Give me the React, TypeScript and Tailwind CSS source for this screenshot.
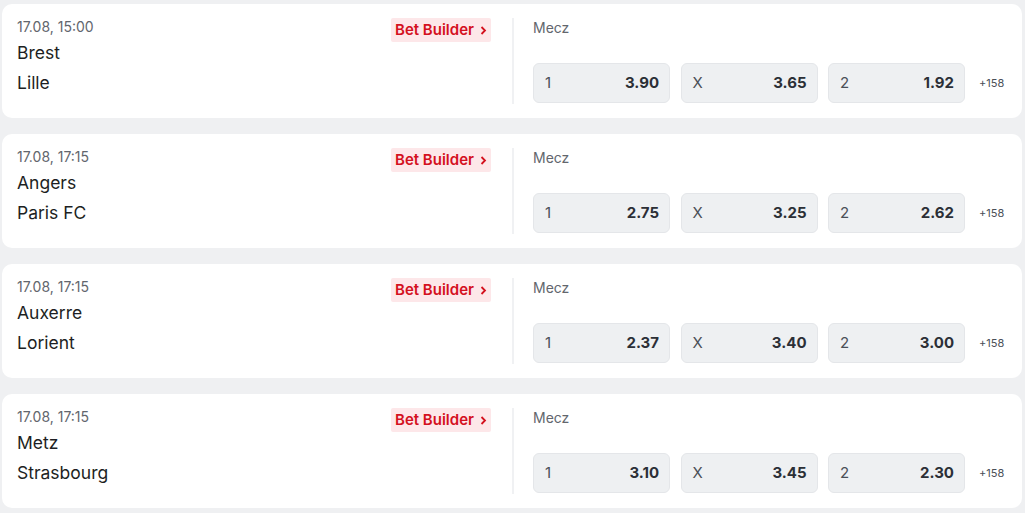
import React from "react";

type Match = {
  time: string;
  home: string;
  away: string;
  odds: [string, string, string];
};

const matches: Match[] = [
  { time: "17.08, 15:00", home: "Brest", away: "Lille", odds: ["3.90", "3.65", "1.92"] },
  { time: "17.08, 17:15", home: "Angers", away: "Paris FC", odds: ["2.75", "3.25", "2.62"] },
  { time: "17.08, 17:15", home: "Auxerre", away: "Lorient", odds: ["2.37", "3.40", "3.00"] },
  { time: "17.08, 17:15", home: "Metz", away: "Strasbourg", odds: ["3.10", "3.45", "2.30"] },
];

const labels = ["1", "X", "2"];

const OddButton = ({ label, value }: { label: string; value: string }) => (
  <button className="flex h-[40px] w-[137px] items-center justify-between rounded-[6px] border border-[#e4e6e9] bg-[#eef0f2] pl-[11px] pr-[10px]">
    <span className="text-[15px] text-[#4a4f57]">{label}</span>
    <span className="text-[15px] font-bold text-[#2b2f36]">{value}</span>
  </button>
);

const MatchCard = ({ match }: { match: Match }) => (
  <div className="flex h-[114px] rounded-[10px] bg-white">
    {/* Teams */}
    <div className="w-[510px] pl-[15px] pr-[21px] pt-[13px]">
      <div className="flex h-[20px] items-start justify-between">
        <span className="text-[14px] leading-[20px] text-[#62666d]">{match.time}</span>
        <span className="mt-[1px] flex h-[24px] w-[100px] items-center justify-center gap-[6px] rounded-[2px] bg-[#fde7e9] text-[15px] font-semibold text-[#d4111e]">
          Bet Builder
          <svg width="7" height="9" viewBox="0 0 7 9" fill="none">
            <path d="M1.5 1L5 4.5L1.5 8" stroke="currentColor" strokeWidth="1.8" />
          </svg>
        </span>
      </div>
      <div className="mt-[1px] text-[17.5px] leading-[30px] text-[#1d1f23]">
        <div>{match.home}</div>
        <div>{match.away}</div>
      </div>
    </div>

    <div className="my-[14px] w-[2px] bg-[#f0f1f3]" />

    {/* Market */}
    <div className="flex-1 pl-[19px] pt-[14px]">
      <div className="text-[14px] leading-[20px] text-[#62666d]">Mecz</div>
      <div className="mt-[25px] flex items-center">
        <div className="flex gap-[10.5px]">
          {match.odds.map((o, i) => (
            <OddButton key={i} label={labels[i]} value={o} />
          ))}
        </div>
        <span className="ml-[14px] text-[11px] text-[#4a4f57]">+158</span>
      </div>
    </div>
  </div>
);

export default function App() {
  return (
    <div
      className="min-h-screen bg-[#eff0f2] px-[2px] pt-[4px] pr-[3px]"
      style={{ fontFamily: "Inter, 'Noto Sans', sans-serif" }}
    >
      <div className="flex flex-col gap-[16px]">
        {matches.map((m, i) => (
          <MatchCard key={i} match={m} />
        ))}
      </div>
    </div>
  );
}
